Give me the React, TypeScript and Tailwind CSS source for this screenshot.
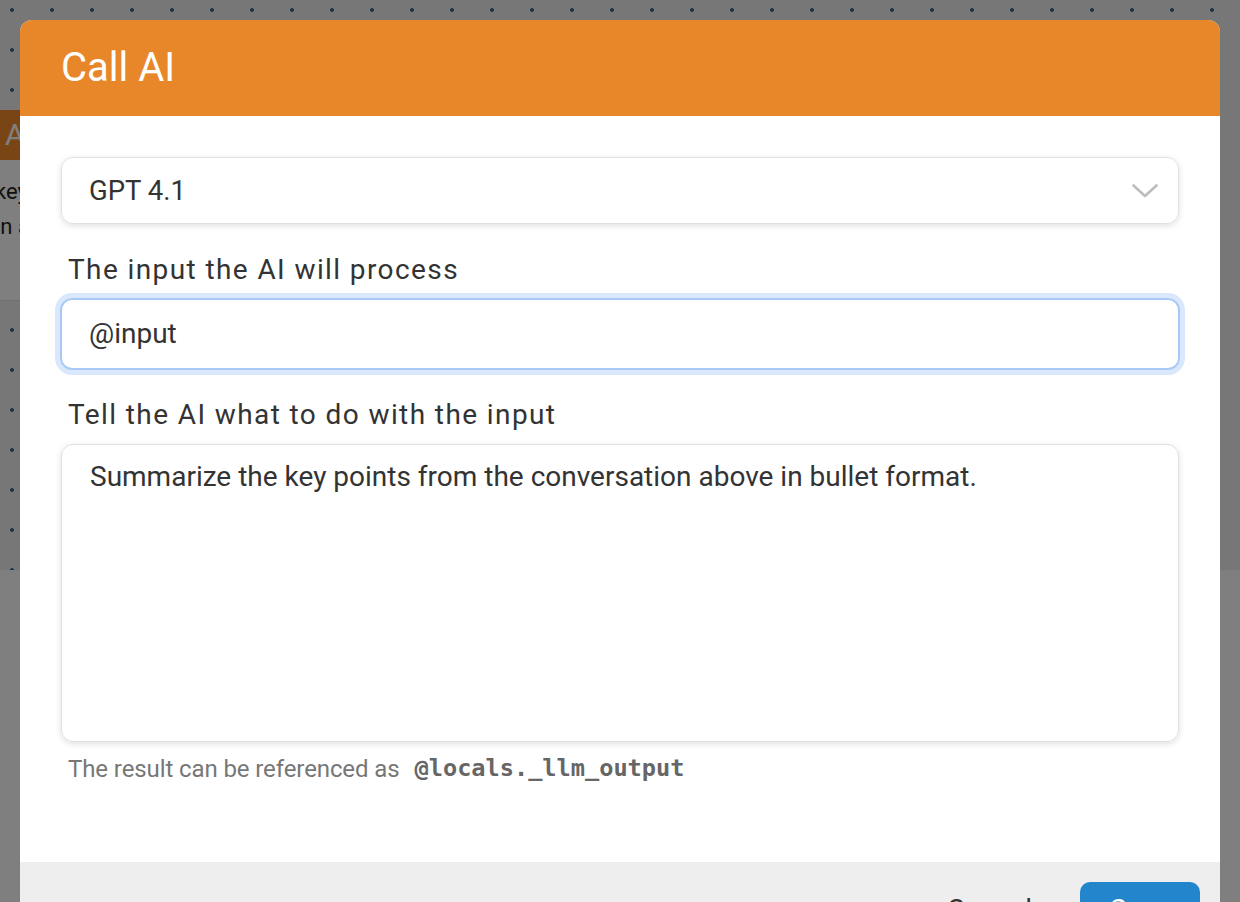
import React from "react";

export default function App() {
  return (
    <div className="relative w-[1240px] h-[902px] overflow-hidden font-['Roboto',sans-serif]">
      {/* background canvas */}
      <div className="absolute inset-0 bg-[#eeeeee] bg-[radial-gradient(circle,#3d6a99_1.6px,transparent_2.2px)] bg-[length:40px_40px] bg-[position:-8px_-10px]" />
      <div className="absolute left-0 right-0 top-[570px] bottom-0 bg-white" />
      {/* background node */}
      <div className="absolute left-[-180px] top-[110px] w-[220px] h-[191px] bg-white border-b border-[#dddddd] flex flex-col">
        <div className="h-[50px] bg-[#f58a2b] text-white text-[30px] leading-[50px] pl-[185px]">AI</div>
        <div className="pl-[175px] pt-[14px] text-[22px] leading-[35px] text-[#222]">
          <div>key</div>
          <div>in a</div>
        </div>
      </div>
      {/* overlay */}
      <div className="absolute inset-0 bg-black/50" />
      {/* modal */}
      <div className="absolute left-[20px] top-[20px] w-[1200px] h-[900px] bg-white rounded-t-[12px] overflow-hidden flex flex-col">
        <div className="h-[96px] shrink-0 bg-[#e8872a] flex items-center px-[41px]">
          <span className="text-white text-[40px] leading-none">Call AI</span>
        </div>
        <div className="flex flex-col px-[41px] pt-[41px] h-[746px] shrink-0">
          <div className="h-[67px] rounded-[12px] border border-[#e0e0e0] shadow-[0_2px_6px_rgba(0,0,0,0.12)] flex items-center justify-between pl-[27px] pr-[20px]">
            <span className="text-[27.5px] text-[#333333]">GPT 4.1</span>
            <svg width="26" height="14" viewBox="0 0 26 14" fill="none">
              <path d="M1.5 1.5 L13 12 L24.5 1.5" stroke="#bdbdbd" strokeWidth="2.6" strokeLinecap="round" strokeLinejoin="round" />
            </svg>
          </div>
          <div className="mt-[26px] mb-[8px] h-[40px] leading-[40px] pl-[7px] text-[28px] tracking-[1.4px] text-[#333333]">
            The input the AI will process
          </div>
          <div className="h-[72px] -mx-px rounded-[12px] border-2 border-[#a8c9f6] shadow-[0_0_0_5px_#d9e8fd] flex items-center pl-[27px]">
            <span className="text-[28px] text-[#333333]">@input</span>
          </div>
          <div className="mt-[25px] mb-[9px] h-[40px] leading-[40px] pl-[7px] text-[28px] tracking-[1.4px] text-[#333333]">
            Tell the AI what to do with the input
          </div>
          <div className="h-[298px] rounded-[12px] border border-[#e0e0e0] shadow-[0_2px_6px_rgba(0,0,0,0.12)] pl-[28px] pt-[14px]">
            <span className="text-[28px] leading-[36px] text-[#333333]">
              Summarize the key points from the conversation above in bullet format.
            </span>
          </div>
          <div className="mt-[11px] h-[32px] flex items-center pl-[7px]">
            <span className="text-[24px] text-[#777777] tracking-[-0.1px]">The result can be referenced as</span>
            <span className="ml-[15px] text-[23.6px] font-bold text-[#666666] font-['DejaVu_Sans_Mono',monospace]">@locals._llm_output</span>
          </div>
        </div>
        <div className="flex-1 bg-[#eeeeee] flex justify-end items-start pt-[20px] pr-[20px]">
          <span className="mt-[10px] mr-[48px] text-[28px] leading-[36px] text-[#333333]">Cancel</span>
          <div className="h-[50px] w-[120px] rounded-[10px] bg-[#2385cc] text-white text-[28px] flex justify-center pt-[10px] leading-[36px]">Save</div>
        </div>
      </div>
    </div>
  );
}
